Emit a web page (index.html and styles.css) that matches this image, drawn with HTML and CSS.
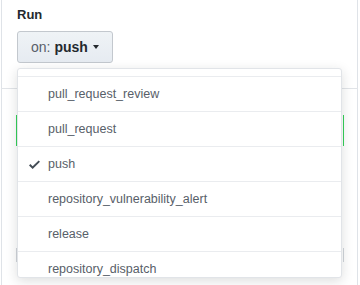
FILE: index.html
```html
<!DOCTYPE html>
<html lang="en">
<head>
    <meta charset="UTF-8">
    <title>Run</title>
    <link rel="stylesheet" href="styles.css">
</head>
<body>

    <div class="panel">
        <div class="head">
            <h3 class="title">Run</h3>
            <button class="btn" type="button">
                <span class="btn-key">on:</span>
                <span class="btn-val">push</span>
                <span class="caret"></span>
            </button>
        </div>

        <div class="body">
            <div class="box box-green"></div>
            <div class="box box-gray"></div>
        </div>

        <div class="menu">
            <div class="menu-top"></div>
            <div class="menu-item"><span class="icon"></span>pull_request_review</div>
            <div class="menu-item"><span class="icon"></span>pull_request</div>
            <div class="menu-item">
                <span class="icon">
                    <svg width="11" height="15" viewBox="0 0 12 16"><path fill="#444d56" d="M12 5l-8 8-4-4 1.5-1.5L4 10l6.5-6.5L12 5z"/></svg>
                </span>push
            </div>
            <div class="menu-item"><span class="icon"></span>repository_vulnerability_alert</div>
            <div class="menu-item"><span class="icon"></span>release</div>
            <div class="menu-item"><span class="icon"></span>repository_dispatch</div>
        </div>
    </div>

</body>
</html>
```

FILE: styles.css
```css
body {
    margin: 0;
    font-family: "Liberation Sans", Arial, sans-serif;
    color: #24292e;
    background: #fff;
}

.panel {
    position: relative;
    margin-left: 1px;
    width: 355px;
    height: 285px;
    border-left: 1px solid #dfe3e8;
    border-right: 1px solid #dfe3e8;
}

.head {
    padding: 6px 15px 0 16px;
    height: 82px;
    border-bottom: 1px solid #e1e4e8;
    margin: 0 -1px;
}

.title {
    margin: 0;
    font-size: 13px;
    line-height: 18px;
    font-weight: bold;
}

.btn {
    margin-top: 7px;
    height: 32px;
    width: 96px;
    box-sizing: border-box;
    padding: 0 0 0 13px;
    display: flex;
    align-items: center;
    background: linear-gradient(#eff3f6, #e6ebf1);
    border: 1px solid #c3c8ce;
    border-radius: 3px;
    font-family: inherit;
    font-size: 14px;
    cursor: pointer;
}

.btn-key {
    color: #586069;
    margin-right: 4px;
}

.btn-val {
    color: #24292e;
    font-weight: bold;
}

.caret {
    margin-left: 5px;
    width: 0;
    height: 0;
    border-left: 3px solid transparent;
    border-right: 3px solid transparent;
    border-top: 4px solid #24292e;
}

.body {
    padding: 26px 13px 0 14px;
}

.box {
    box-sizing: border-box;
}

.box-green {
    height: 31px;
    border-left: 1px solid #34d058;
    border-right: 1px solid #34d058;
}

.box-gray {
    margin-top: 102px;
    height: 14px;
    border-left: 1px solid #d1d5da;
    border-right: 1px solid #d1d5da;
}

.menu {
    position: absolute;
    left: 15px;
    top: 68px;
    width: 325px;
    height: 210px;
    box-sizing: border-box;
    background: #fff;
    border: 1px solid #e1e4e8;
    border-radius: 3px;
    box-shadow: 0 3px 12px rgba(27, 31, 35, 0.15);
    overflow: hidden;
}

.menu-top {
    height: 7px;
}

.menu-item {
    display: flex;
    align-items: center;
    height: 35px;
    box-sizing: border-box;
    padding-left: 11px;
    border-top: 1px solid #eaecef;
    font-size: 12.5px;
    color: #586069;
}

.icon {
    width: 19px;
    display: flex;
    align-items: center;
}
```
